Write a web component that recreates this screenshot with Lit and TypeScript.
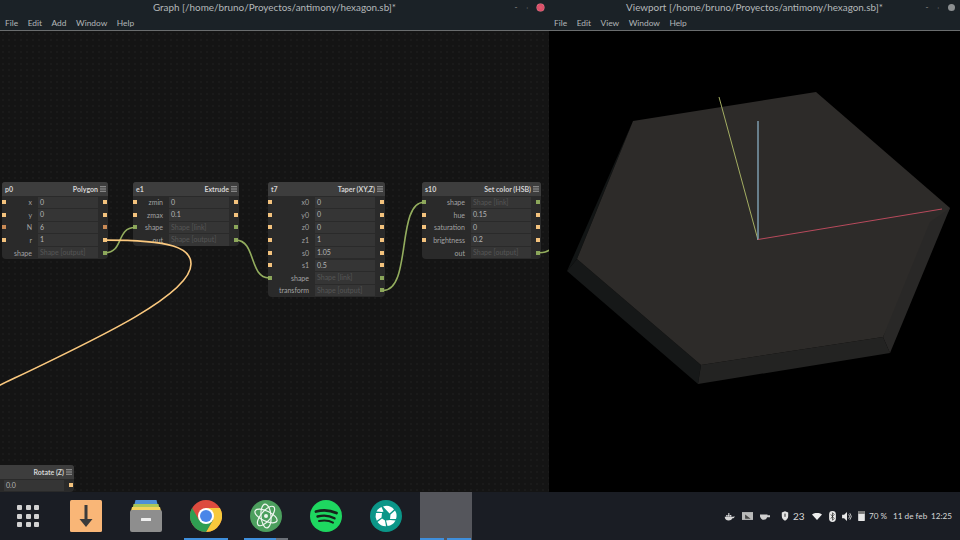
import { LitElement, css, html, svg } from 'lit';
import { customElement } from 'lit/decorators.js';

type Row = { label: string; value: string; dim?: boolean; left?: string; right?: string };
type GraphNode = { id: string; name: string; x: number; y: number; w: number; rows: Row[] };

const canvasTop = 31;
const float = (label: string, value: string, left = 'float', right = 'float'): Row => ({ label, value, left, right });
const link: Row = { label: 'shape', value: 'Shape [link]', dim: true, left: 'shape', right: 'shape' };
const output = (label: string): Row => ({ label, value: 'Shape [output]', dim: true, right: 'shape' });

const nodes: GraphNode[] = [
	{
		id: 'p0', name: 'Polygon', x: 2, y: 182, w: 106,
		rows: [float('x', '0'), float('y', '0'), float('N', '6', 'int', 'int'), float('r', '1'), output('shape')],
	},
	{
		id: 'e1', name: 'Extrude', x: 133, y: 182, w: 106,
		rows: [float('zmin', '0'), float('zmax', '0.1'), link, output('out')],
	},
	{
		id: 't7', name: 'Taper (XY,Z)', x: 268, y: 182, w: 117,
		rows: [
			float('x0', '0'), float('y0', '0'), float('z0', '0'), float('z1', '1'),
			float('s0', '1.05'), float('s1', '0.5'), link, output('transform'),
		],
	},
	{
		id: 's10', name: 'Set color (HSB)', x: 422, y: 182, w: 119,
		rows: [link, float('hue', '0.15'), float('saturation', '0'), float('brightness', '0.2'), output('out')],
	},
	{
		id: '', name: 'Rotate (Z)', x: -40, y: 465, w: 114,
		rows: [float('', '0.0')],
	},
];

const wires = [
	{ cls: 'green', d: 'M105 252.7C124 252.7 116 227.5 135 227.5' },
	{ cls: 'green', d: 'M236 240.1C256 240.1 249 277.9 269 277.9' },
	{ cls: 'green', d: 'M383 290.5C412 290.5 396 202.3 424 202.3' },
	{ cls: 'green', d: 'M539 252.7C545 252.7 546 252 552 249' },
	{ cls: 'orange', d: 'M105 240.1C172 240.1 191 248 191 264C191 296 90 342 -4 387' },
];

const menuIcon = html`<svg class="burger" viewBox="0 0 8 7"><path d="M0 .5h8M0 3.5h8M0 6.5h8"></path></svg>`;

const chrome = html`<svg class="app" viewBox="0 0 32 32">
	<circle cx="16" cy="16" r="16" fill="#dd4b3e"></circle>
	<path d="M29.86 8A16 16 0 0 1 16 32L23 20 16 8Z" fill="#f7c93c"></path>
	<path d="M16 32A16 16 0 0 1 2.14 8L9 20 23 20Z" fill="#2f9e52"></path>
	<circle cx="16" cy="16" r="8" fill="#fff"></circle>
	<circle cx="16" cy="16" r="6" fill="#4a86e8"></circle>
</svg>`;

const atom = html`<svg class="app" viewBox="0 0 32 32">
	<circle cx="16" cy="16" r="16" fill="#4c9f5e"></circle>
	<g fill="none" stroke="#eef5ef" stroke-width="1.2">
		<ellipse cx="16" cy="16" rx="12" ry="5" transform="rotate(25 16 16)"></ellipse>
		<ellipse cx="16" cy="16" rx="12" ry="5" transform="rotate(-50 16 16)"></ellipse>
		<ellipse cx="16" cy="16" rx="12" ry="5" transform="rotate(85 16 16)"></ellipse>
	</g>
	<circle cx="16" cy="16" r="2" fill="#eef5ef"></circle>
</svg>`;

const spotify = html`<svg class="app" viewBox="0 0 32 32">
	<circle cx="16" cy="16" r="16" fill="#1ed760"></circle>
	<g fill="none" stroke="#17231b" stroke-linecap="round">
		<path d="M6 11.5C13 9.5 20 10 26.5 13" stroke-width="2.8"></path>
		<path d="M7.5 16.5C13.5 15 19.5 15.5 24.5 18.3" stroke-width="2.4"></path>
		<path d="M9 21C14 20 19 20.3 23 22.6" stroke-width="2"></path>
	</g>
</svg>`;

const aperture = html`<svg class="app" viewBox="0 0 32 32">
	<circle cx="16" cy="16" r="16" fill="#0b9688"></circle>
	<g fill="#fff">
		<path d="M13 6.5A10 10 0 0 1 24 9.5L19.5 13.5Z"></path>
		<path d="M25 10.5A10 10 0 0 1 26 19H20L20.5 14.5Z"></path>
		<path d="M25.5 20.5A10 10 0 0 1 17.5 26L16 20.5 20 20Z"></path>
		<path d="M16 26.2A10 10 0 0 1 7.5 22L12 18.5 15 20.5Z"></path>
		<path d="M6.8 20.8A10 10 0 0 1 6 13H12L11.5 17.5Z"></path>
		<path d="M6.5 11.5A10 10 0 0 1 11.5 7L13.5 11.5 12 12Z"></path>
	</g>
</svg>`;

const download = html`<svg class="app" viewBox="0 0 32 32">
	<rect width="32" height="32" rx="1.5" fill="#f9b677"></rect>
	<path d="M14.5 5h3v14h5L16 27 9.5 19h5Z" fill="#3b3b3b"></path>
</svg>`;

const files = html`<svg class="app" viewBox="0 0 32 32">
	<path d="M5.5 0h21l1 4H4.5Z" fill="#4f8fd6"></path>
	<path d="M3.5 4h25l1 5h-27Z" fill="#a9c65a"></path>
	<path d="M2 7h28l1 4H1Z" fill="#f3d35c"></path>
	<rect y="10" width="32" height="22" rx="2" fill="#8e8e8e"></rect>
	<rect x="11" y="18" width="10" height="3" rx=".5" fill="#eee"></rect>
</svg>`;

@customElement('app-root')
export class AppRoot extends LitElement {
	port(kind: string | undefined, side: string) {
		return kind ? html`<span class="port ${side} ${kind}"></span>` : null;
	}

	renderNode(n: GraphNode) {
		return html`
			<div class="node" style="left:${n.x}px;top:${n.y - canvasTop}px;width:${n.w}px">
				<div class="head">
					<span class="id">${n.id}</span>
					<span class="name">${n.name}</span>
					${menuIcon}
				</div>
				${n.rows.map(r => html`
					<div class="row">
						${this.port(r.left, 'left')}
						<span class="label">${r.label}</span>
						<span class="field ${r.dim ? 'dim' : ''}">${r.value}</span>
						${this.port(r.right, 'right')}
					</div>
				`)}
			</div>
		`;
	}

	menu(items: string[]) {
		return html`<div class="menu">${items.map(i => html`<span>${i}</span>`)}</div>`;
	}

	render() {
		return html`
			<div class="windows">
				<section class="window graph">
					<div class="title">
						Graph [/home/bruno/Proyectos/antimony/hexagon.sb]*
						<span class="controls"><b>-</b><b>˒</b><i class="close"></i></span>
					</div>
					${this.menu(['File', 'Edit', 'Add', 'Window', 'Help'])}
					<div class="canvas">
						${nodes.map(n => this.renderNode(n))}
						<svg class="wires" viewBox="0 ${canvasTop} 549 461">
							${wires.map(w => svg`<path class=${w.cls} d=${w.d}></path>`)}
						</svg>
					</div>
				</section>
				<section class="window viewport">
					<div class="title">
						Viewport [/home/bruno/Proyectos/antimony/hexagon.sb]*
						<span class="controls"><b>-</b><b>˒</b><i></i></span>
					</div>
					${this.menu(['File', 'Edit', 'View', 'Window', 'Help'])}
					<div class="scene">
						<svg viewBox="549 ${canvasTop} 411 461">
							<polygon points="633,121 577,259 567,271" fill="#121515"></polygon>
							<polygon points="577,259 567,271 698,384 701,365" fill="#161818"></polygon>
							<polygon points="701,365 698,384 890,353 883,337" fill="#232322"></polygon>
							<polygon points="633,121 816,92 950,208 883,337 701,365 577,259" fill="#2d2b29"></polygon>
							<polygon points="950,208 930,222 883,337 890,353" fill="#292827"></polygon>
							<line x1="719" y1="97" x2="758" y2="240" stroke="#a3ad62" stroke-width="1"></line>
							<line x1="758" y1="121" x2="758" y2="240" stroke="#7c9dae" stroke-width="1.5"></line>
							<line x1="758" y1="239.5" x2="942" y2="209" stroke="#b84a5c" stroke-width="1"></line>
						</svg>
					</div>
				</section>
			</div>
			<footer class="dock">
				<div class="launcher">${Array.from({ length: 9 }, () => html`<i></i>`)}</div>
				<div class="slot">${download}</div>
				<div class="slot">${files}</div>
				<div class="slot open">${chrome}</div>
				<div class="slot open split">${atom}</div>
				<div class="slot">${spotify}</div>
				<div class="slot">${aperture}</div>
				<div class="slot active"></div>
				<div class="tray">
					<svg class="docker" viewBox="0 0 15 11"><path d="M1 6h11c1 0 1.500-1 2.500-1-.3 2-1.500 3-3 3-1 2-3 3-5 3C3 11 1 9 1 6ZM3 3.500h2v2H3ZM5.500 3.500h2v2h-2ZM8 3.500h2v2H8ZM5.500 1h2v2h-2Z" fill="#d8d8d8"></path></svg>
					<svg class="screen" viewBox="0 0 14 10"><rect width="14" height="10" fill="#b9b9b9"></rect><path d="M4 3l7 5.500H4Z" fill="#444"></path></svg>
					<svg class="cup" viewBox="0 0 12 8"><path d="M0 1.500h9v1h3V5H8.500C8 7 6.500 8 4.500 8S1 7 0 4Z" fill="#cfcfcf"></path></svg>
					<svg class="shield" viewBox="0 0 10 12"><path d="M5 0l4 1.500V6c0 3-2 5-4 6-2-1-4-3-4-6V1.500Z" fill="#e2e2e2"></path><path d="M5 3v4" stroke="#222" stroke-width="1.200"></path></svg>
					<span class="count">23</span>
					<svg class="wifi" viewBox="0 0 13 9"><path d="M0 2c4-3 9-3 13 0L6.500 9Z" fill="#eee"></path></svg>
					<svg class="bt" viewBox="0 0 8 13"><rect width="8" height="13" rx="4" fill="#e8e8e8"></rect><path d="M2 4l4 5-2 2V2l2 2-4 5" fill="none" stroke="#222" stroke-width=".8"></path></svg>
					<svg class="vol" viewBox="0 0 12 11"><path d="M0 3.500h2.500L6 0v11L2.500 7.500H0Z" fill="#e8e8e8"></path><path d="M8 3a3.500 3.500 0 0 1 0 5M9.500 1.500a6 6 0 0 1 0 8" fill="none" stroke="#e8e8e8"></path></svg>
					<svg class="bat" viewBox="0 0 8 12"><rect width="8" height="12" rx="1" fill="#e6e6e6"></rect><rect width="8" height="3.500" fill="#777"></rect></svg>
					<span class="pct">70 %</span>
					<span class="date">11 de feb</span>
					<span class="time">12:25</span>
				</div>
			</footer>
		`;
	}

	static styles = css`
	:host {
		display: block;
		width: 960px;
		height: 540px;
		overflow: hidden;
		background: #1a1d24;
		font-family: Lato, "Noto Sans", sans-serif;
	}

	.windows {
		display: flex;
		height: 492px;
	}

	.window {
		display: flex;
		flex-direction: column;
		min-width: 0;
		background: #1b2227;
	}

	.graph { width: 549px; }
	.viewport { width: 411px; }

	.title {
		position: relative;
		height: 15px;
		line-height: 15px;
		text-align: center;
		font-size: 9.9px;
		color: #b4b8ba;
		white-space: nowrap;
	}

	.controls {
		position: absolute;
		right: 5px;
		top: 0;
		display: flex;
		align-items: center;
		gap: 9px;
		height: 15px;
		color: #777;
		font-size: 8px;
	}

	.controls i {
		width: 7px;
		height: 7px;
		border-radius: 50%;
		background: #8b8f91;
	}

	.controls i.close {
		background: #e0576a;
		box-shadow: inset 0 0 0 2px #d9506a, 0 0 0 .5px #f08a98;
	}

	.menu {
		display: flex;
		gap: 9.5px;
		height: 15px;
		padding-left: 5px;
		align-items: center;
		font-size: 8.4px;
		color: #b2b6b8;
		border-bottom: 1px solid #6a6d6e;
	}

	.canvas {
		position: relative;
		flex: 1;
		overflow: hidden;
		background-color: #141414;
		background-image: radial-gradient(circle, #1b1b1b 0.7px, transparent 0.8px);
		background-size: 6px 6px;
	}

	.node {
		position: absolute;
		background: #2a2a2a;
		border-radius: 3px 3px 4px 4px;
		font-size: 7px;
	}

	.head {
		display: flex;
		align-items: center;
		height: 14px;
		padding: 0 2px 0 3px;
		background: #3d3d3d;
		border-radius: 3px 3px 0 0;
		font-weight: 700;
		color: #d4d4d4;
	}

	.name { margin-left: auto; white-space: nowrap; }

	.burger {
		width: 6px;
		height: 6px;
		margin-left: 2px;
		stroke: #c0c0c0;
		stroke-width: 1;
	}

	.row {
		position: relative;
		display: flex;
		align-items: center;
		height: 12.6px;
	}

	.label {
		flex: 1;
		text-align: right;
		color: #a3a3a3;
		white-space: nowrap;
	}

	.field {
		width: 60px;
		height: 11.5px;
		line-height: 11.5px;
		margin: 0 10px 0 6px;
		padding-left: 2px;
		box-sizing: border-box;
		background: #353535;
		color: #b6b6b6;
		white-space: nowrap;
		overflow: hidden;
	}

	.field.dim { color: #565656; }

	.port {
		position: absolute;
		top: 4.3px;
		width: 4px;
		height: 4px;
	}

	.port.left { left: 0; }
	.port.right { right: 1px; }
	.port.float { background: #f3c27d; }
	.port.int { background: #c98a55; }
	.port.shape { background: #8ba65a; }

	.wires {
		position: absolute;
		inset: 0;
		width: 549px;
		height: 461px;
		fill: none;
		stroke-width: 1.6;
	}

	.wires .green { stroke: #93ad5e; }
	.wires .orange { stroke: #fbc97f; }

	.scene {
		flex: 1;
		background: #000;
	}

	.scene svg {
		display: block;
		width: 411px;
		height: 461px;
	}

	.dock {
		display: flex;
		align-items: center;
		height: 48px;
		background: #1a1d24;
	}

	.launcher {
		display: grid;
		grid-template-columns: repeat(3, 5px);
		gap: 3.5px;
		width: 39px;
		padding-left: 17px;
	}

	.launcher i {
		width: 5px;
		height: 5px;
		border-radius: 1px;
		background: #d2d2d2;
	}

	.slot {
		position: relative;
		display: flex;
		align-items: center;
		justify-content: center;
		width: 60px;
		height: 48px;
	}

	.slot.open::after,
	.slot.active::after {
		content: "";
		position: absolute;
		left: 8px;
		right: 8px;
		bottom: 0;
		height: 2px;
		background: #3f8fdc;
	}

	.slot.split::after {
		right: 20px;
		box-shadow: 12px 0 0 #6b7078;
	}

	.slot.active {
		background: #55565c;
		width: 52px;
		margin-left: 4px;
	}

	.slot.active::after {
		left: 0;
		right: 28px;
		box-shadow: 27px 0 0 #3f8fdc;
	}

	.app {
		width: 32px;
		height: 32px;
	}

	.tray {
		display: flex;
		align-items: center;
		margin-left: auto;
		padding-right: 8px;
		color: #d6d6d6;
		font-size: 8.2px;
	}

	.tray svg { flex: none; }
	.docker { width: 11px; height: 9px; }
	.screen { width: 11px; height: 8px; margin-left: 7px; }
	.cup { width: 10px; height: 7px; margin-left: 7px; }
	.shield { width: 8px; height: 10px; margin-left: 11px; }
	.count { margin-left: 4px; width: 11px; font-size: 10px; }
	.wifi { width: 10px; height: 7px; margin-left: 8px; }
	.bt { width: 7px; height: 11px; margin-left: 7px; }
	.vol { width: 10px; height: 9px; margin-left: 6px; }
	.bat { width: 7px; height: 10px; margin-left: 6px; }
	.pct { margin-left: 4px; width: 17px; white-space: nowrap; }
	.date { margin-left: 7px; width: 33px; white-space: nowrap; }
	.time { margin-left: 5px; width: 21px; }
	`;
}

declare global {
	interface HTMLElementTagNameMap {
		'app-root': AppRoot;
	}
}
